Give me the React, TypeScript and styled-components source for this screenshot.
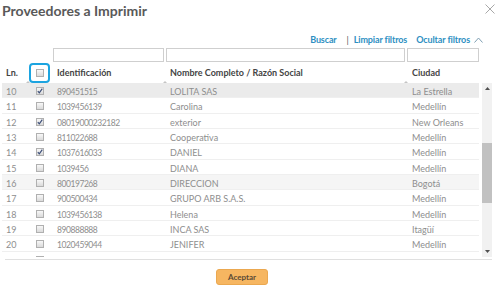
import React from "react";
import styled, { createGlobalStyle } from "styled-components";

const GlobalStyle = createGlobalStyle`
  html, body { margin: 0; padding: 0; background: #fff; }
  body { font-family: Lato, "Open Sans", sans-serif; }
  * { box-sizing: border-box; }
`;

const COLS = "26px 24px 113px 241px 74px";

const Dialog = styled.div`
  width: 497px;
  height: 289px;
  overflow: hidden;
  background: #fff;
  display: flex;
  flex-direction: column;
`;

const TitleBar = styled.div`
  display: flex;
  justify-content: space-between;
  align-items: flex-start;
  height: 20px;
  padding: 2px 2px 0 2px;
`;

const Title = styled.h1`
  margin: 0;
  font: 700 14px/18px Lato, sans-serif;
  color: #595959;
`;

const CloseButton = styled.button`
  border: 0;
  background: none;
  padding: 0;
  margin-top: 2px;
  width: 10px;
  height: 10px;
  display: flex;
  cursor: pointer;
`;

const Toolbar = styled.div`
  display: flex;
  justify-content: flex-end;
  align-items: center;
  height: 12px;
  margin-top: 14px;
  padding-right: 14px;
  font: 700 9px/12px Lato, sans-serif;
  letter-spacing: -0.12px;
`;

const LinkButton = styled.a<{ $gap?: number }>`
  color: #2d8fc2;
  text-decoration: none;
  margin-left: ${(p) => p.$gap ?? 0}px;
  cursor: pointer;
`;

const Separator = styled.span`
  color: #555;
  font-weight: 400;
  margin-left: 10px;
  margin-right: 5px;
`;

const Chevron = styled.svg`
  margin-left: 4px;
  width: 9px;
  height: 6px;
`;

const Grid = styled.div`
  margin-left: 2px;
  width: 490px;
`;

const FilterRow = styled.div`
  display: grid;
  grid-template-columns: ${COLS};
  height: 14px;
  margin-top: 2px;
`;

const FilterInput = styled.input<{ $col: number }>`
  grid-column: ${(p) => p.$col};
  height: 14px;
  margin: 0 1px 0 1px;
  border: 1px solid #cfcfcf;
  padding: 0 3px;
  font: 400 9px Lato, sans-serif;
  background: #fff;
  outline: none;
`;

const HeaderRow = styled.div`
  display: grid;
  grid-template-columns: ${COLS};
  width: 478px;
  height: 21px;
`;

const HeaderCell = styled.div<{ $tick?: boolean; $pad?: number }>`
  position: relative;
  padding: 5px 0 0 ${(p) => p.$pad ?? 5}px;
  font: 700 9px/12px Lato, sans-serif;
  color: #444;
  white-space: nowrap;
  &::after {
    content: "";
    display: ${(p) => (p.$tick ? "block" : "none")};
    position: absolute;
    right: -2px;
    bottom: 0;
    width: 0;
    height: 0;
    border-left: 2px solid transparent;
    border-right: 2px solid transparent;
    border-bottom: 2px solid #c4c4c4;
  }
`;

const CheckHeader = styled.div`
  display: flex;
  align-items: center;
  justify-content: center;
`;

const FocusRing = styled.span`
  display: flex;
  align-items: center;
  justify-content: center;
  width: 21px;
  height: 20px;
  margin-right: 1px;
  border: 2px solid #1ca4e0;
  border-radius: 4px;
`;

const Body = styled.div`
  display: flex;
  height: 174px;
`;

const Rows = styled.div`
  width: 478px;
  overflow: hidden;
`;

const Row = styled.div<{ $bg?: string }>`
  display: grid;
  grid-template-columns: ${COLS};
  height: 15.33px;
  border-bottom: 1px solid #efefef;
  background: ${(p) => p.$bg ?? "#fff"};
`;

const Cell = styled.div<{ $pad?: number; $narrow?: boolean }>`
  padding: 3px 0 0 ${(p) => p.$pad ?? 5}px;
  font: 400 ${(p) => (p.$narrow ? "8.5px" : "9px")}/12px Lato, sans-serif;
  letter-spacing: ${(p) => (p.$narrow ? "-0.45px" : "0")};
  color: #8e8e8e;
  white-space: nowrap;
  overflow: hidden;
`;

const CheckCell = styled.div`
  display: flex;
  justify-content: center;
  padding-top: 4px;
  padding-right: 1px;
`;

const Box = styled.span`
  display: flex;
  align-items: center;
  justify-content: center;
  width: 8px;
  height: 8px;
  border: 1px solid #b0b0b0;
  background: linear-gradient(#f8f8f8, #dadada);
`;

const Scrollbar = styled.div`
  width: 10px;
  margin-left: 3px;
  display: flex;
  flex-direction: column;
  background: #f1f1f1;
`;

const ScrollArrow = styled.div`
  height: 11px;
  display: flex;
  align-items: center;
  justify-content: center;
`;

const ScrollTrack = styled.div`
  flex: 1;
  display: flex;
  flex-direction: column;
`;

const Thumb = styled.div`
  height: 60px;
  background: #c1c1c1;
`;

const Divider = styled.div`
  height: 1px;
  margin: 2px 5px 0 5px;
  background: #e0e0e0;
`;

const Footer = styled.div`
  display: flex;
  justify-content: center;
  padding-right: 13px;
  margin-top: 9px;
`;

const AcceptButton = styled.button`
  width: 52px;
  height: 16px;
  border: 1px solid #eba850;
  border-radius: 3px;
  background: #f6b661;
  color: #5a4a35;
  font: 700 8px/14px Lato, sans-serif;
  padding: 0;
  cursor: pointer;
`;

type RowData = {
  ln?: number;
  id?: string;
  name?: string;
  city?: string;
  checked?: boolean;
  bg?: string;
};

const rows: RowData[] = [
  { ln: 10, id: "890451515", name: "LOLITA SAS", city: "La Estrella", checked: true, bg: "#ebebeb" },
  { ln: 11, id: "1039456139", name: "Carolina", city: "Medellín" },
  { ln: 12, id: "08019000232182", name: "exterior", city: "New Orleans", checked: true },
  { ln: 13, id: "811022688", name: "Cooperativa", city: "Medellín" },
  { ln: 14, id: "1037616033", name: "DANIEL", city: "Medellín", checked: true },
  { ln: 15, id: "1039456", name: "DIANA", city: "Medellín" },
  { ln: 16, id: "800197268", name: "DIRECCION", city: "Bogotá", bg: "#f5f5f5" },
  { ln: 17, id: "900500434", name: "GRUPO ARB S.A.S.", city: "Medellín" },
  { ln: 18, id: "1039456138", name: "Helena", city: "Medellín" },
  { ln: 19, id: "890888888", name: "INCA SAS", city: "Itagüí" },
  { ln: 20, id: "1020459044", name: "JENIFER", city: "Medellín" },
  {},
];

const CheckMark = () => (
  <svg width="6" height="6" viewBox="0 0 6 6">
    <polyline points="0.8,3.2 2.3,4.8 5.3,0.6" fill="none" stroke="#3c4e78" strokeWidth="1.2" />
  </svg>
);

const Checkbox = ({ checked }: { checked?: boolean }) => <Box>{checked && <CheckMark />}</Box>;

const scrollTop = 49;

export default function App() {
  return (
    <>
      <GlobalStyle />
      <Dialog>
        <TitleBar>
          <Title>Proveedores a Imprimir</Title>
          <CloseButton aria-label="Cerrar">
            <svg width="10" height="10" viewBox="0 0 10 10">
              <path d="M0.5 0.5 L9.5 9.5 M9.5 0.5 L0.5 9.5" stroke="#a8a8a8" strokeWidth="1" fill="none" />
            </svg>
          </CloseButton>
        </TitleBar>
        <Toolbar>
          <LinkButton>Buscar</LinkButton>
          <Separator>|</Separator>
          <LinkButton>Limpiar filtros</LinkButton>
          <LinkButton $gap={9}>Ocultar filtros</LinkButton>
          <Chevron viewBox="0 0 9 6">
            <polyline points="0.5,5.5 4.5,1 8.5,5.5" fill="none" stroke="#7f9fb3" strokeWidth="1" />
          </Chevron>
        </Toolbar>
        <Grid>
          <FilterRow>
            <FilterInput $col={3} />
            <FilterInput $col={4} />
            <FilterInput $col={5} />
          </FilterRow>
          <HeaderRow>
            <HeaderCell $tick $pad={4}>Ln.</HeaderCell>
            <CheckHeader>
              <FocusRing>
                <Checkbox />
              </FocusRing>
            </CheckHeader>
            <HeaderCell $tick>Identificación</HeaderCell>
            <HeaderCell $tick>Nombre Completo / Razón Social</HeaderCell>
            <HeaderCell $pad={6}>Ciudad</HeaderCell>
          </HeaderRow>
          <Body>
            <Rows>
              {rows.map((r, i) => (
                <Row key={i} $bg={r.bg}>
                  <Cell $pad={4}>{r.ln}</Cell>
                  <CheckCell>
                    <Checkbox checked={r.checked} />
                  </CheckCell>
                  <Cell $narrow>{r.id}</Cell>
                  <Cell>{r.name}</Cell>
                  <Cell $pad={6}>{r.city}</Cell>
                </Row>
              ))}
            </Rows>
            <Scrollbar>
              <ScrollArrow>
                <svg width="5" height="3" viewBox="0 0 5 3">
                  <polygon points="0,3 2.5,0 5,3" fill="#505050" />
                </svg>
              </ScrollArrow>
              <ScrollTrack>
                <Thumb style={{ marginTop: scrollTop }} />
              </ScrollTrack>
              <ScrollArrow>
                <svg width="5" height="3" viewBox="0 0 5 3">
                  <polygon points="0,0 2.5,3 5,0" fill="#505050" />
                </svg>
              </ScrollArrow>
            </Scrollbar>
          </Body>
        </Grid>
        <Divider />
        <Footer>
          <AcceptButton>Aceptar</AcceptButton>
        </Footer>
      </Dialog>
    </>
  );
}
